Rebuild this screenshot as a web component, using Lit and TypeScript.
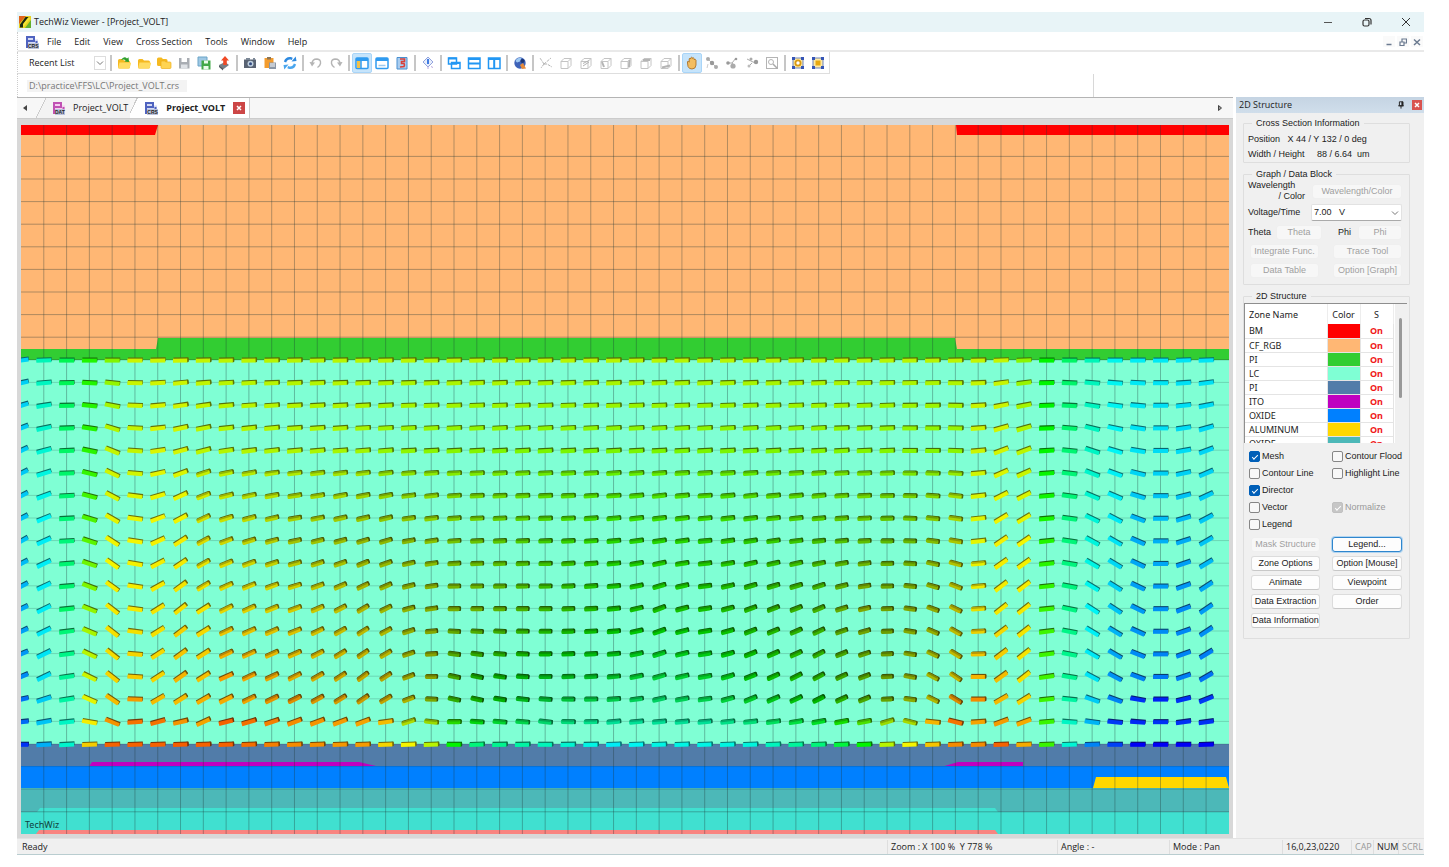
import { LitElement, html, svg, css, nothing } from "lit";
import { customElement } from "lit/decorators.js";
import { classMap } from "lit/directives/class-map.js";
import { styleMap } from "lit/directives/style-map.js";

/* ---------- director field ---------- */

const ROW_KEYS = [0, 4, 8, 11, 14, 15, 16, 17];
type Sample = [number, number, number?]; // hue, angle, lightness

const FIELD: Record<number, Sample[]> = {
  0: [[188, 8], [190, 25], [192, 28], [198, 26], [206, 22], [212, 12], [214, 6], [228, 0]],
  1: [[165, 2], [172, 15], [182, 24], [182, 26], [185, 26], [190, 18], [192, 10], [197, 3]],
  2: [[140, 0], [145, 2], [150, 3], [145, 6], [157, 8], [160, 9], [168, 6], [170, 3]],
  3: [[112, 0], [110, -12], [98, -18], [84, -22], [70, -26], [64, -24], [58, -10], [50, 2]],
  4: [[88, 0], [72, -22], [61, -33], [57, -38], [52, -38], [46, -34], [36, -22], [24, 2]],
  5: [[70, 0], [72, -4], [60, -9], [57, -8], [50, -4], [38, -2], [28, 4], [24, 2]],
  6: [[70, 1], [66, 8], [59, 24], [56, 32], [52, 33], [46, 30], [28, 15], [24, 2]],
  7: [[70, 1], [68, 15], [58, 32], [55, 38], [44, 35], [46, 32], [36, 13], [23, 2]],
  8: [[72, 1], [74, 14], [60, 28, 45], [56, 32], [47, 32], [43, 30], [40, 24], [24, 2]],
  9: [[74, 1], [76, 8], [62, 20, 44], [56, 26, 47], [38, 24], [42, 26], [24, 14], [24, 2]],
  12: [[75, 1], [77, 5], [70, 12, 40], [57, 20, 44], [46, 26, 46], [38, 26, 46], [34, 20], [34, 2]],
  15: [[75, 1], [80, 4], [72, 16, 38], [62, 30, 38], [52, 36, 40], [46, 34, 42], [40, 20], [38, 2]],
  16: [[75, 1], [84, 4], [74, 16, 38], [68, 26, 37], [54, 32, 38], [50, 30, 40], [46, 8], [52, 2]],
  17: [[75, 1], [85, 3], [76, 10, 38], [72, 15, 36], [64, 20, 34], [62, 20, 36], [72, 18, 45], [60, 2]],
  18: [[75, 1], [86, 3], [78, 8, 40], [74, 8, 35], [70, 0, 33], [76, -2, 34], [78, -6, 45], [75, 2]],
  19: [[75, 1], [87, 3], [84, 4, 40], [80, 0, 35], [96, -12, 34], [104, -12, 35], [110, 0, 45], [120, 0]],
  20: [[75, 1], [88, 3], [88, 3, 40], [84, 0, 36], [112, -12, 34], [114, -12, 35], [124, -4, 44], [150, 2]],
  23: [[75, 1], [90, 3], [102, 2, 42], [102, 0, 37], [128, 0, 37], [136, -4, 38], [150, -6, 44], [165, 0]],
  26: [[75, 1], [90, 3], [110, 5, 44], [115, 5, 40], [132, 5, 40], [142, 4, 42], [160, 5, 46], [182, 2]],
  28: [[75, 1], [90, 3], [110, 8, 44], [114, 20, 40], [136, 16, 43], [148, 12, 43], [160, 5, 46], [176, 2]],
  30: [[75, 1], [90, 3], [110, 5, 43], [114, 8, 40], [132, 10, 43], [142, 8, 43], [160, 5, 46], [176, 2]],
  32: [[75, 1], [90, 3], [108, 8, 42], [110, 20, 37], [122, 22, 40], [132, 22, 42], [152, 6, 46], [174, 2]],
  35: [[75, 1], [88, 3], [100, 6, 40], [98, 22, 36], [108, 28, 36], [120, 26, 38], [130, 10, 46], [150, 2]],
  37: [[75, 1], [88, 2], [90, 3, 39], [74, 12, 34], [90, 20, 33], [94, 22, 34], [100, 10, 46], [120, 2]],
  38: [[75, 1], [88, 2], [90, 0, 38], [78, 2, 33], [80, 2, 32], [82, 2, 33], [78, 16, 45], [75, 2]],
  39: [[75, 1], [88, 0], [86, -2, 38], [74, -8, 34], [72, -10, 34], [72, -8, 35], [74, -14, 45], [60, 2]],
  40: [[75, 1], [88, 0], [78, -8, 39], [70, -20, 35], [66, -28, 37], [62, -26, 38], [44, -6], [48, 2]],
  41: [[74, 1], [86, -2], [68, -10, 41], [60, -26, 38], [56, -34, 40], [38, -32, 45], [28, -14], [34, 2]],
  42: [[72, 1], [70, 5], [64, 6], [58, 4, 47], [44, 0], [34, 0], [40, 4], [34, 2]],
  43: [[72, 2], [68, 20], [59, 34], [57, 38], [46, 36], [45, 30], [38, 20], [24, 2]],
  44: [[86, 2], [74, 20], [60, 34], [57, 38], [55, 38], [52, 32], [42, 20], [42, 2]],
  45: [[120, 0], [120, 3], [112, 6], [106, 6], [104, 8], [105, 6], [106, 5], [106, 2]],
  46: [[145, 0], [148, -6], [150, -9], [152, -12], [155, -10], [160, -6], [168, -4], [172, 2]],
  47: [[165, 0], [168, -18], [174, -28], [180, -33], [184, -28], [190, -20], [196, -8], [208, 2]],
  48: [[178, 0], [180, -16], [184, -30], [192, -33], [204, -28], [208, -20], [226, -6], [224, 0]],
  49: [[182, 0], [184, -10], [198, -24], [202, -26], [208, -20], [228, -10], [230, -4], [240, 0]],
  50: [[183, 0], [186, 0], [197, 0], [204, 0], [210, 0], [232, 0], [228, 0], [240, 0]],
  51: [[184, 2], [186, 10], [198, 18], [206, 20], [209, 18], [228, 14], [228, 8], [240, 0]],
  52: [[184, 2], [188, 20], [192, 30], [202, 34], [212, 30], [226, 22], [228, 8], [240, 2]],
};
const COL_KEYS = Object.keys(FIELD).map(Number).sort((a, b) => a - b);

const mix = (a: number, b: number, t: number) => a + (b - a) * t;

function bracket(keys: number[], v: number): [number, number, number] {
  let i = 0;
  while (i < keys.length - 2 && keys[i + 1] <= v) i++;
  return [i, i + 1, (v - keys[i]) / (keys[i + 1] - keys[i])];
}

function sampleColumn(col: number, row: number): number[] {
  const [a, b, t] = bracket(ROW_KEYS, row);
  const p = FIELD[col][a];
  const q = FIELD[col][b];
  return [mix(p[0], q[0], t), mix(p[1], q[1], t), mix(p[2] ?? 50, q[2] ?? 50, t)];
}

function sample(col: number, row: number): number[] {
  const [a, b, t] = bracket(COL_KEYS, col);
  const p = sampleColumn(COL_KEYS[a], row);
  const q = sampleColumn(COL_KEYS[b], row);
  return p.map((v, i) => mix(v, q[i], t));
}

const STEP_X = 22.79;
const STEP_Y = 22.6;
const COLS = Array.from({ length: 53 }, (_, i) => i);
const ROWS = Array.from({ length: 18 }, (_, i) => i);
const LINES_Y = Array.from({ length: 30 }, (_, i) => 31.4 + i * STEP_Y);

function director(col: number, row: number) {
  const [h, a, l] = sample(col, row);
  const len = l < 50 ? 15 - (50 - l) * 0.15 : 15;
  const left = -len / 2;
  const hue = h.toFixed(0);
  const inPlane = l >= 50;
  const cap = (col > 6 && col < 43) || !inPlane;
  return svg`<g transform="translate(${(col * STEP_X).toFixed(1)} ${(235.3 + row * STEP_Y).toFixed(1)}) rotate(${(-a).toFixed(0)})">
    <rect x=${left + 0.5} y="-2.8" width=${len} height="4" rx=${inPlane ? 0 : 1.6} fill="hsl(${hue} 85% ${(l * 0.48).toFixed(0)}%)"></rect>
    ${cap ? svg`<rect x=${-left - 2} y="-2.5" width="2.700" height="4.500" rx="1" fill="hsl(${hue} 90% ${(l * 0.48).toFixed(0)}%)"></rect>` : nothing}
    <rect x=${left} y="-1.7" width=${cap ? len - 0.8 : len} height="4" rx=${inPlane ? 0 : 1.4} fill="hsl(${hue} 100% ${(l * 0.96).toFixed(0)}%)"></rect>
    ${inPlane ? nothing : svg`<rect x=${left + 0.5} y="-2.1" width=${len - 2} height="1.800" rx="1" fill="hsl(${hue} 95% ${(l * 0.76).toFixed(0)}%)"></rect>`}
  </g>`;
}

@customElement("structure-view")
class StructureView extends LitElement {
  static styles = css`
    :host { display: block; position: relative; overflow: hidden; }
    svg { display: block; width: 100%; height: 100%; }
    .mark { position: absolute; left: 4px; bottom: 2px; font: 9px/14px "Noto Sans", "Open Sans", sans-serif; color: #10403c; }
  `;
  render() {
    return html`<svg viewBox="0 0 1208 709" preserveAspectRatio="none" role="img" aria-label="Cell cross section">
        <rect width="1208" height="236" fill="#ffb774"></rect>
        <path d="M0 0H137L134 10H0ZM935 0H1208V10H936Z" fill="#f00"></path>
        <path d="M0 224H135L137 213H934L936 224H1208V236H0Z" fill="#32cd32"></path>
        <rect y="235" width="1208" height="385" fill="#7fffd4"></rect>
        <rect y="619" width="1208" height="23" fill="#517ca9"></rect>
        <path d="M68 641.5L71 637H338L357 641.5ZM922 641.5L937 637H1002V641.5Z" fill="#c000c0"></path>
        <rect y="641" width="1208" height="22" fill="#0080ff"></rect>
        <path d="M1072 663L1075 652H1205L1208 663Z" fill="#ffd700"></path>
        <rect y="663" width="1208" height="25" fill="#4cb8b8"></rect>
        <path d="M0 687H16L19 683H974L977 687H1208V709H0Z" fill="#40e0d0"></path>
        <path d="M15 709L18 705H974L977 709Z" fill="#f98480"></path>
        ${COLS.slice(1).map((c) => svg`<line x1=${c * STEP_X} x2=${c * STEP_X} y1="0" y2="709" stroke="#203838" stroke-opacity=".34"></line>`)}
        ${LINES_Y.map((y) => svg`<line x1="0" x2="1208" y1=${y} y2=${y} stroke="#203838" stroke-opacity=${y > 236 && y < 680 ? 0.2 : 0.36}></line>`)}
        ${ROWS.map((r) => COLS.map((c) => director(c, r)))}
      </svg>
      <span class="mark">TechWiz</span>`;
  }
}

/* ---------- icons ---------- */

const folder = svg`<path d="M2 5.500q0-1.500 1.500-1.500h3l1.500 1.500h4.500q1.500 0 1.500 1.500v5q0 1.500-1.500 1.500h-9q-1.500 0-1.500-1.500z" fill="#f5b920"></path><path d="M3.500 7.500h10.500q1.500 0 1 1.300l-1.200 3.700q-.3 1-1.500 1h-9q-1.300 0-1-1.200z" fill="#ffdc62"></path>`;
const cube = svg`<path d="M3 6.500h7v7h-7zM3 6.500l3-3h7l-3 3M13 3.500v7l-3 3" fill="none" stroke="#c4c4c4"></path>`;
const pane = svg`<rect x="2" y="3" width="12" height="10.500" rx="1" fill="#fff" stroke="#2f9bf0" stroke-width="1.500"></rect><path d="M2 4.500h12" stroke="#2f9bf0" stroke-width="3"></path>`;
const corners = svg`<rect x="3" y="3" width="10" height="10" fill="#ffe9a0" stroke="#6d83bd"></rect><path d="M2 2h3v3h-3zM11 2h3v3h-3zM2 11h3v3h-3zM11 11h3v3h-3z" fill="#3555b5"></path>`;

const ICONS: Record<string, unknown> = {
  open: svg`${folder}<path d="M5 5q3-4.500 6-1.500l1.500-1.300.5 4.800-4.500-.5 1.200-1.300q-2-1.500-4.700-.2z" fill="#2ea02e"></path>`,
  folder,
  folders: svg`<path d="M1 4q0-1.500 1.500-1.500h3l1.500 1.500h3q1.500 0 1.500 1.500v4q0 1.500-1.500 1.500h-7.500q-1.500 0-1.500-1.500z" fill="#f5b920"></path><path d="M5 7q0-1 1-1h2.500l1.500 1h4q1 0 1 1v4.500q0 1-1 1h-8q-1 0-1-1z" fill="#ffd453" stroke="#eeb01e" stroke-width=".7"></path>`,
  save: svg`<path d="M3 3h10.500v10.500h-10.500z" fill="#a9adb3"></path><path d="M5.500 3h5.500v4h-5.500z" fill="#fff"></path><path d="M5 9.500h6.500v4h-6.500z" fill="#dfe2e6"></path>`,
  saveas: svg`<path d="M2 2h9v9h-9z" fill="#9fc8e4" stroke="#6ba4c7"></path><path d="M5.500 5.500h9v9h-9z" fill="#42a848"></path><path d="M8 5.500h4v3h-4zM7.500 11h5v3.500h-5z" fill="#eafbea"></path>`,
  export: svg`<path d="M3 10l6-3 4 3-6 4.500z" fill="#777f87"></path><path d="M3 10v2l4 3.500v-2z" fill="#50585f"></path><path d="M9 1l4 4.500h-2.200v4.500h-3.600v-4.500h-2.200z" fill="#f04a26"></path>`,
  camera: svg`<path d="M2 4.500h12v8.500h-12z" fill="#596372"></path><path d="M4 3h4v2h-4zM11 3h2v2h-2z" fill="#7b8795"></path><circle cx="8.500" cy="8.800" r="3" fill="#bfd0df"></circle><circle cx="8.500" cy="8.800" r="1.500" fill="#334a80"></circle>`,
  paste: svg`<path d="M2.500 3h9v10h-9z" fill="#f39c2e"></path><path d="M5 2h4v2.500h-4z" fill="#8c7556"></path><path d="M7 7.500h7v6.500h-7z" fill="#8b97a6"></path><path d="M8 9h5M8 11h5" stroke="#fff"></path>`,
  refresh: svg`<path d="M3 7q1.500-4.500 6-3.700l1.300.5" fill="none" stroke="#2e8ae0" stroke-width="2.400"></path><path d="M9.500 6.500l5-.5-.8-4.500z" fill="#2e8ae0"></path><path d="M13 9q-1.500 4.500-6 3.700l-1.300-.5" fill="none" stroke="#4aa6ee" stroke-width="2.400"></path><path d="M6.500 9.500l-5 .5.800 4.500z" fill="#4aa6ee"></path>`,
  undo: svg`<path d="M4 9q0-5 5-5 4 .5 3.500 4.500-.5 2.500-3 4" fill="none" stroke="#b4b4b4" stroke-width="1.400"></path><path d="M1.500 7l2.500 4.500 3-4z" fill="#b4b4b4"></path>`,
  redo: svg`<path d="M12 9q0-5-5-5-4 .5-3.500 4.500.5 2.500 3 4" fill="none" stroke="#b4b4b4" stroke-width="1.400"></path><path d="M14.500 7l-2.500 4.500-3-4z" fill="#b4b4b4"></path>`,
  paneLeft: svg`${pane}<path d="M3 6h3.500v7h-3.500z" fill="#f2c14a"></path><path d="M7 6v7" stroke="#2f9bf0" stroke-width="1.500"></path>`,
  paneTop: svg`${pane}<path d="M4.500 10.500h7" stroke="#9cc9ef" stroke-width="1.500"></path>`,
  report: svg`<path d="M3 2.500h10v11.500h-10z" fill="#a9cdf0" stroke="#4a90d0"></path><path d="M6 4h4.500v2.500h-3v2h2.500q1 1.500 0 3l-4 .5" stroke="#d9403a" stroke-width="1.600" fill="none"></path>`,
  about: svg`<path d="M8 2l5 5-5 5-5-5z" fill="#e7edfb" stroke="#93a4dd"></path><path d="M8 4v5" stroke="#2c6fe0" stroke-width="1.800"></path><path d="M8 11.500v2.500M11 11.500l2 1" stroke="#b9a7dd"></path>`,
  cascade: svg`<path d="M2.500 3h8v6h-8zM5.500 7.500h8.500v6h-8.500z" fill="#fff" stroke="#2196f3" stroke-width="1.500"></path><path d="M2.500 3.500h8M5.500 8h8.500" stroke="#2196f3" stroke-width="2.200"></path>`,
  rows: svg`<path d="M2.500 3h11.500v10.500h-11.500z" fill="#fff" stroke="#2196f3" stroke-width="1.500"></path><path d="M2.500 4h11.500M2.500 8.500h11.500" stroke="#2196f3" stroke-width="2"></path>`,
  cols: svg`<path d="M2.500 3h11.500v10.500h-11.500z" fill="#fff" stroke="#2196f3" stroke-width="1.500"></path><path d="M2.500 4h11.500M8.200 4v9.500" stroke="#2196f3" stroke-width="2"></path>`,
  globe: svg`<circle cx="8" cy="8" r="5.700" fill="#3d62b8"></circle><path d="M3.500 6q2-4 6-3l-1.500 3.500-3 1z" fill="#9fc9f2"></path><path d="M8 10l3-2 3 5.500-4 .5z" fill="#e58a3a"></path><circle cx="10.500" cy="6" r="2" fill="#1c3573"></circle>`,
  axes: svg`<path d="M6 9l-4-6M6 9l7-6M6 9l-3 4M6 9h3l5 3" fill="none" stroke="#b4b4b4" stroke-dasharray="3 1"></path>`,
  cube,
  cubeX: svg`${cube}<path d="M5 8.500l6-3M5 11l6-4" stroke="#b4b4b4"></path>`,
  cubeL: svg`${cube}<path d="M4 7l2 5" stroke="#b4b4b4" stroke-width="2"></path>`,
  cubeR: svg`${cube}<path d="M11.500 5l-.5 7" stroke="#b4b4b4" stroke-width="2"></path>`,
  cubeT: svg`${cube}<path d="M5 5h7" stroke="#b4b4b4" stroke-width="2"></path>`,
  cubeB: svg`${cube}<path d="M4 12.500l8-2" stroke="#b4b4b4" stroke-width="2"></path>`,
  hand: svg`<path d="M3.500 8q-.5-2 1-1.600l.7.800v-3.400q.8-1.400 1.600 0v-1q.9-1.200 1.700 0v.5q1-1 1.700.3v1q1.200-.8 1.800.5v5q-.3 3.900-4 3.900-3 0-4-2.500z" fill="#f3bd60" stroke="#a5661a" stroke-width=".8"></path>`,
  node1: svg`<path d="M3 3l9 9" stroke="#bbb"></path><circle cx="4" cy="4" r="2" fill="#aaa"></circle><circle cx="8" cy="8" r="2.200" fill="#999"></circle><circle cx="12" cy="12" r="2" fill="#aaa"></circle><path d="M4 9l-1 4" stroke="#ccc"></path>`,
  node2: svg`<path d="M3 8h5l4-5M8 8l3 4" stroke="#aaa" fill="none"></path><circle cx="4" cy="8" r="1.800" fill="#999"></circle><circle cx="9" cy="11" r="2.600" fill="#aaa"></circle><circle cx="12" cy="4" r="1.300" fill="#999"></circle>`,
  node3: svg`<path d="M3 4l6 3 3 1M4 12l4-4" stroke="#aaa" fill="none"></path><circle cx="12" cy="7" r="2.200" fill="#999"></circle><circle cx="7" cy="4" r="1.500" fill="#aaa"></circle><circle cx="5" cy="11" r="1.500" fill="#bbb"></circle>`,
  zoomBox: svg`<rect x="2.500" y="2.500" width="11" height="11" fill="none" stroke="#b4b4b4"></rect><circle cx="7" cy="7" r="2.500" fill="none" stroke="#b4b4b4"></circle><path d="M9 9l4.500 4.500" stroke="#aaa" stroke-width="1.500"></path>`,
  fitAll: svg`${corners}<circle cx="8" cy="8" r="2.600" fill="#fff" stroke="#d99a12" stroke-width="1.800"></circle>`,
  fitBox: svg`${corners}<path d="M5.500 5.500h5v5h-5z" fill="#e9a90f"></path>`,
};

const icon = (name: string) => html`<svg class="ic" viewBox="0 0 16 16" aria-hidden="true">${ICONS[name]}</svg>`;

const docIcon = (tone: string, pale: string, tag: string) => html`<span class="doc" aria-hidden="true">
  <svg viewBox="0 0 14 14" width="14" height="14">
    <path d="M1 1h8.500v3.500h3.500v8.500h-12z" fill=${pale}></path>
    <path d="M2 1v12M1 2h8v4h-6M11.500 6v6" stroke=${tone} stroke-width="2" fill="none"></path>
  </svg><span class="tag">${tag}</span></span>`;

const chevron = html`<svg class="chev" viewBox="0 0 10 10" aria-hidden="true"><path d="M2 3.500l3 3 3-3" fill="none" stroke="#777"></path></svg>`;
const cross = html`<svg viewBox="0 0 10 10" width="8" height="8" aria-hidden="true"><path d="M2.500 2.500l5 5m0-5l-5 5" stroke="#fff" stroke-width="1.800"></path></svg>`;

const GROUPS: string[][] = [
  ["open", "folder", "folders", "save", "saveas", "export"],
  ["camera", "paste", "refresh"],
  ["undo", "redo"],
  ["paneLeft*", "paneTop", "report"],
  ["about"],
  ["cascade", "rows", "cols"],
  ["globe"],
  ["axes", "cube", "cubeX", "cubeL", "cubeR", "cubeT", "cubeB"],
  ["hand*", "node1", "node2", "node3", "zoomBox"],
  ["fitAll", "fitBox"],
];

const ZONES: [string, string][] = [
  ["BM", "#ff0000"], ["CF_RGB", "#ffb774"], ["PI", "#32cd32"], ["LC", "#7fffd4"], ["PI", "#517ca9"],
  ["ITO", "#c000c0"], ["OXIDE", "#0080ff"], ["ALUMINUM", "#ffd700"], ["OXIDE", "#4cb8b8"],
];

/* ---------- side panel ---------- */

@customElement("structure-panel")
class StructurePanel extends LitElement {
  static styles = css`
    :host { display: block; font: 9px/11px "Liberation Sans", Arial, sans-serif; color: #222; background: #f0f0f0; }
    * { box-sizing: border-box; }
    .head { display: flex; align-items: center; height: 16px; padding: 0 2px 0 3px; background: linear-gradient(#c5d4e3, #d0deeb); font: 9px/16px "Open Sans", sans-serif; }
    .head h2 { flex: 1; margin: 0; font: inherit; }
    .head button { border: 0; padding: 0; background: none; height: 10px; width: 10px; display: grid; place-items: center; }
    .head .close { background: #d9534f; margin-left: 6px; }
    .body { padding: 4px 14px 0 7px; display: grid; gap: 5px; }
    fieldset { margin: 0; min-width: 0; border: 1px solid #dedede; border-radius: 1px; }
    legend { margin-left: 4px; padding: 0 4px; line-height: 12px; }
    .info { padding: 3px 7px 0 4px; }
    .line { display: flex; height: 15px; align-items: center; white-space: pre; }
    .data { padding: 0 7px 4px 4px; }
    .row { display: grid; align-items: center; column-gap: 4px; }
    .wave { grid-template-columns: 60px 1fr; height: 22px; }
    .wave label { display: grid; }
    .wave label span + span { text-align: right; padding-right: 3px; }
    .volt { grid-template-columns: 59px 1fr; height: 20px; }
    .angles { grid-template-columns: 26px 46px 12px 18px 1fr; column-gap: 2px; height: 20px; }
    .angles .phi { grid-column: 4; }
    .pair { grid-template-columns: 69px 69px; justify-content: space-between; margin-left: 2px; height: 19px; }
    button { font: inherit; color: inherit; }
    .btn { height: 15px; padding: 0; border: 1px solid #dcdcdc; border-bottom-color: #c8c8c8; border-radius: 3px; background: #fdfdfd; white-space: nowrap; }
    .btn:disabled { color: #9f9f9f; background: #f7f7f7; border-color: #efefef; }
    .btn.focus { border: 1px solid #2f86cd; box-shadow: 0 0 0 1px #b3d5f0; }
    .pick { position: relative; display: block; }
    .pick select { appearance: none; width: 100%; height: 17px; padding: 0 2px; font: inherit; color: inherit; border: 1px solid #e2e2e2; border-bottom-color: #aaa; border-radius: 2px; background: #fff; }
    .pick .chev { position: absolute; right: 2px; top: 4px; width: 10px; height: 10px; pointer-events: none; }
    .zone { padding: 0 2px 10px 0; }
    .zone legend { margin-left: 8px; }
    .list { display: flex; justify-content: space-between; height: 140px; margin-top: 1px; overflow: hidden; border-top: 1px solid #8e8e8e; border-left: 1px solid #8e8e8e; background: #fff; }
    table { width: 148px; align-self: flex-start; border-collapse: collapse; table-layout: fixed; font: 9px/13px "Noto Sans", sans-serif; }
    th { width: 33px; font-weight: 400; height: 20px; padding: 0; border-right: 1px solid #ededed; }
    th:first-child { width: 82px; }
    th:first-child, td:first-child { text-align: left; padding-left: 4px; }
    td { height: 14px; padding: 0; border-right: 1px solid #e4e4e4; border-bottom: 1px solid #e4e4e4; line-height: 13px; }
    td:last-child { text-align: center; color: #f01818; font-weight: 700; }
    .track { width: 12px; padding: 14px 4px 0; background: #f0f0f0; }
    .thumb { width: 3px; height: 80px; border-radius: 2px; background: #999; }
    .checks { display: grid; grid-template-columns: 83px 1fr; grid-auto-rows: 17px; padding: 5px 0 0 5px; margin-bottom: 4px; }
    .checks label { display: flex; align-items: center; gap: 2px; white-space: nowrap; }
    .checks .off { color: #999; }
    .wide { grid-column: 1 / 3; }
    input { appearance: none; flex: none; width: 11px; height: 11px; margin: 0; border: 1px solid #868686; border-radius: 2px; background: #f8f8f8; display: grid; place-items: center; }
    input:checked { background: #005fb8; border-color: #005fb8; }
    input:disabled { background: #c6c6c6; border-color: #c0c0c0; }
    input:checked::after { content: ""; width: 5px; height: 2px; border-left: 1px solid #fff; border-bottom: 1px solid #fff; transform: rotate(-45deg); }
    .actions { display: grid; grid-template-columns: 69px 70px; justify-content: space-between; gap: 4px; padding: 0 5px 0 7px; }
  `;

  private check(id: string, label: string, on = false, off = false, wide = false) {
    return html`<label class=${classMap({ off, wide })} for=${id}><input type="checkbox" id=${id} .checked=${on} ?disabled=${off}>${label}</label>`;
  }

  render() {
    return html`
      <header class="head">
        <h2>2D Structure</h2>
        <button aria-label="Auto hide"><svg viewBox="0 0 10 10" width="8" height="8"><path d="M3 1h4.500v5h-4.500zM1.500 6h7M5 6v3.500" fill="none" stroke="#222" stroke-width="1.200"></path><path d="M5.500 1h2v5h-2z" fill="#222"></path></svg></button>
        <button class="close" aria-label="Close panel">${cross}</button>
      </header>
      <div class="body">
        <fieldset class="info"><legend>Cross Section Information</legend>
          <div class="line">Position   X 44 / Y 132 / 0 deg</div>
          <div class="line">Width / Height     88 / 6.64  um</div>
        </fieldset>
        <fieldset class="data"><legend>Graph / Data Block</legend>
          <div class="row wave"><label for="wave"><span>Wavelength</span><span>/ Color</span></label><button class="btn" id="wave" disabled>Wavelength/Color</button></div>
          <div class="row volt"><label for="volt">Voltage/Time</label><span class="pick"><select id="volt"><option>7.00 &nbsp; V</option></select>${chevron}</span></div>
          <div class="row angles"><label for="theta">Theta</label><button class="btn" id="theta" disabled>Theta</button><label class="phi" for="phi">Phi</label><button class="btn" id="phi" disabled>Phi</button></div>
          <div class="row pair"><button class="btn" disabled>Integrate Func.</button><button class="btn" disabled>Trace Tool</button></div>
          <div class="row pair"><button class="btn" disabled>Data Table</button><button class="btn" disabled>Option [Graph]</button></div>
        </fieldset>
        <fieldset class="zone"><legend>2D Structure</legend>
          <div class="list">
            <table>
              <thead><tr><th>Zone Name</th><th>Color</th><th>S</th></tr></thead>
              <tbody>${ZONES.map(([name, color]) => html`<tr><td>${name}</td><td style=${styleMap({ background: color })}></td><td>On</td></tr>`)}</tbody>
            </table>
            <div class="track"><div class="thumb"></div></div>
          </div>
          <div class="checks">
            ${this.check("mesh", "Mesh", true)}${this.check("flood", "Contour Flood")}
            ${this.check("cline", "Contour Line")}${this.check("hline", "Highlight Line")}
            ${this.check("director", "Director", true, false, true)}
            ${this.check("vector", "Vector")}${this.check("normalize", "Normalize", true, true)}
            ${this.check("legend", "Legend")}
          </div>
          <div class="actions">
            <button class="btn" disabled>Mask Structure</button><button class="btn focus">Legend...</button>
            <button class="btn">Zone Options</button><button class="btn">Option [Mouse]</button>
            <button class="btn">Animate</button><button class="btn">Viewpoint</button>
            <button class="btn">Data Extraction</button><button class="btn">Order</button>
            <button class="btn">Data Information</button>
          </div>
        </fieldset>
      </div>`;
  }
}

/* ---------- application window ---------- */

@customElement("app-root")
class AppRoot extends LitElement {
  static styles = css`
    :host { display: flex; box-sizing: border-box; height: 100vh; padding: 12px 25px 12px 17px; background: #fff; font: 9px/12px "Open Sans", "Noto Sans", sans-serif; color: #222; }
    * { box-sizing: border-box; }
    button { font: inherit; color: inherit; border: 0; padding: 0; background: none; }
    .window { flex: 1; min-width: 0; display: flex; flex-direction: column; border-bottom: 1px solid #b9cdd0; }
    .title { display: flex; align-items: center; height: 20px; padding: 0 8px 0 2px; gap: 3px; background: #e8f4f7; }
    .title h1 { flex: 1; margin: 0; font: inherit; }
    .controls { display: flex; gap: 18px; }
    .controls button { width: 21px; height: 16px; display: grid; place-items: center; }
    .menu { display: flex; align-items: center; height: 20px; padding: 1px 1px 0 7px; border-bottom: 2px solid #e9e9e9; border-left: 1px dotted #ccc; gap: 13px; }
    .menu .spacer { flex: 1; }
    .menu .mdi { display: flex; gap: 2px; }
    .mdi button { width: 12px; height: 11px; display: grid; place-items: center; background: #fafafa; }
    .doc { position: relative; display: inline-block; width: 14px; height: 14px; flex: none; }
    .doc svg { display: block; }
    .tag { position: absolute; left: 3px; bottom: 0; font: 700 5px/6px "Liberation Sans", sans-serif; color: #222; background: #bcc4dd; }
    .menu .doc { margin-right: -5px; }
    .tools { display: flex; align-items: center; align-self: flex-start; height: 22px; padding-right: 1px; border: 1px solid #dedede; border-top: 0; border-left: 1px dotted #ccc; }
    .recent { position: relative; width: 77px; margin: 0 2px 0 11px; }
    .recent select { appearance: none; width: 100%; height: 16px; padding: 0; border: 0; background: #fff; font: inherit; color: inherit; }
    .recent .chev { position: absolute; right: 0; top: 1px; width: 12px; height: 14px; border: 1px solid #ddd; pointer-events: none; }
    .group { display: flex; }
    .group::before { content: ""; width: 2px; height: 16px; margin: 2px; background: #c6c6c6; }
    .tool { width: 20px; height: 20px; display: grid; place-items: center; }
    .tool.active { background: #c6e4fb; border: 1px solid #a9d5f8; border-radius: 2px; }
    .ic { width: 16px; height: 16px; display: block; }
    .path { display: flex; align-items: center; align-self: flex-start; width: calc(100% - 330px); height: 23px; border-left: 1px dotted #ccc; border-right: 1px solid #d8d8d8; padding-left: 9px; color: #777; }
    .path span { padding: 0 8px 0 2px; background: #f3f3f3; }
    .main { flex: 1; min-height: 0; display: flex; background: #f0f0f0; }
    .left { flex: 1; min-width: 0; display: flex; flex-direction: column; border-top: 1px solid #b4b4b4; }
    .tabs { display: flex; align-items: stretch; height: 21px; background: #f7f7f7; border-bottom: 1px solid #ccc; }
    .arrow { width: 16px; display: grid; place-items: center; }
    .arrow.end { margin-left: auto; width: 26px; }
    .tab { display: flex; align-items: center; gap: 7px; padding: 0 2px 0 19px; background: linear-gradient(116deg, transparent 11px, #ccc 11px, #ccc 12px, #f3f3f3 12px); }
    .tab.current { padding: 0 4px 0 14px; gap: 8px; font-weight: 700; background: linear-gradient(116deg, transparent 6px, #ccc 6px, #ccc 7px, #fff 7px); border-right: 1px solid #ccc; }
    .tab .x { width: 12px; height: 12px; background: #cc4646; display: grid; place-items: center; }
    .canvas { flex: 1; min-height: 0; display: flex; padding: 6px 4px 4px 4px; background: #d8d8d8; }
    structure-view { flex: 1; min-width: 0; }
    .split { width: 3px; background: #fff; }
    structure-panel { width: 188px; flex: none; }
    .status { display: grid; grid-template-columns: 1fr 170px 112px 113px 69px 22px 25px 26px; height: 16px; align-items: center; background: #f0f0f0; border-top: 1px solid #e2e2e2; }
    .status span { padding-left: 3px; border-left: 1px solid #dedede; white-space: pre; line-height: 14px; }
    .status span:first-child { padding-left: 5px; border: 0; }
    .status .dim { color: #999; }
  `;

  render() {
    return html`<div class="window">
      <header class="title">
        <svg viewBox="0 0 12 12" width="12" height="12" aria-hidden="true"><path d="M0 0h12v12h-12z" fill="#e5d020"></path><path d="M0 0h7l-7 8z" fill="#e0641c"></path><path d="M6.500 1h3l-5.500 7v3.500h-3v-3z" fill="#1b2a10"></path><path d="M6 12l6-8v8z" fill="#62b02c"></path><path d="M9 2h2.500l-7.500 9.500v-3z" fill="#f2e636"></path></svg>
        <h1>TechWiz Viewer - [Project_VOLT]</h1>
        <div class="controls">
          <button aria-label="Minimize"><svg width="10" height="10" viewBox="0 0 10 10"><path d="M1 5.500h8" stroke="#555"></path></svg></button>
          <button aria-label="Restore"><svg width="10" height="10" viewBox="0 0 10 10"><rect x="1" y="3" width="6" height="6" rx="1.500" fill="none" stroke="#333" stroke-width="1.200"></rect><path d="M3 1.500h4q2 0 2 2v4" fill="none" stroke="#333" stroke-width="1.200"></path></svg></button>
          <button aria-label="Close"><svg width="10" height="10" viewBox="0 0 10 10"><path d="M1 1l8 8m0-8l-8 8" stroke="#333"></path></svg></button>
        </div>
      </header>
      <nav class="menu">
        ${docIcon("#4f63c0", "#d4daf4", "CRS")}
        ${["File", "Edit", "View", "Cross Section", "Tools", "Window", "Help"].map((m) => html`<button>${m}</button>`)}
        <span class="spacer"></span>
        <span class="mdi">
          <button aria-label="Minimize document"><svg width="8" height="8" viewBox="0 0 8 8"><path d="M1.500 6.500h5" stroke="#6b7a90" stroke-width="1.500"></path></svg></button>
          <button aria-label="Restore document"><svg width="8" height="8" viewBox="0 0 8 8"><path d="M1 4h4v3.500h-4zM3 3.500v-2.500h4.500v4h-2" fill="none" stroke="#6b7a90" stroke-width="1.200"></path></svg></button>
          <button aria-label="Close document"><svg width="8" height="8" viewBox="0 0 8 8"><path d="M1 1.500l6 5.500m0-5.500l-6 5.500" stroke="#6b7a90" stroke-width="1.500"></path></svg></button>
        </span>
      </nav>
      <div class="tools" role="toolbar">
        <span class="recent"><select aria-label="Recent List"><option>Recent List</option></select>${chevron}</span>
        ${GROUPS.map((g) => html`<div class="group">${g.map((n) => {
          const name = n.replace("*", "");
          return html`<button class=${classMap({ tool: true, active: n !== name })} aria-label=${name}>${icon(name)}</button>`;
        })}</div>`)}
      </div>
      <div class="path"><span>D:\\practice\\FFS\\LC\\Project_VOLT.crs</span></div>
      <div class="main">
        <section class="left">
          <div class="tabs">
            <button class="arrow" aria-label="Previous tab"><svg width="6" height="8" viewBox="0 0 6 8"><path d="M5 1v6l-4-3z" fill="#444"></path></svg></button>
            <button class="tab">${docIcon("#c052b4", "#f4cfee", "DAT")}Project_VOLT</button>
            <div class="tab current">${docIcon("#4f63c0", "#d4daf4", "CRS")}<span>Project_VOLT</span><button class="x" aria-label="Close tab">${cross}</button></div>
            <button class="arrow end" aria-label="Next tab"><svg width="6" height="8" viewBox="0 0 6 8"><path d="M1.500 1.500v5l3-2.500z" fill="#999" stroke="#444"></path></svg></button>
          </div>
          <div class="canvas"><structure-view></structure-view></div>
        </section>
        <div class="split"></div>
        <structure-panel></structure-panel>
      </div>
      <footer class="status">
        <span>Ready</span><span>Zoom : X 100 %  Y 778 %</span><span>Angle : -</span><span>Mode : Pan</span><span>16,0,23,0220</span><span class="dim">CAP</span><span>NUM</span><span class="dim">SCRL</span>
      </footer>
    </div>`;
  }
}
